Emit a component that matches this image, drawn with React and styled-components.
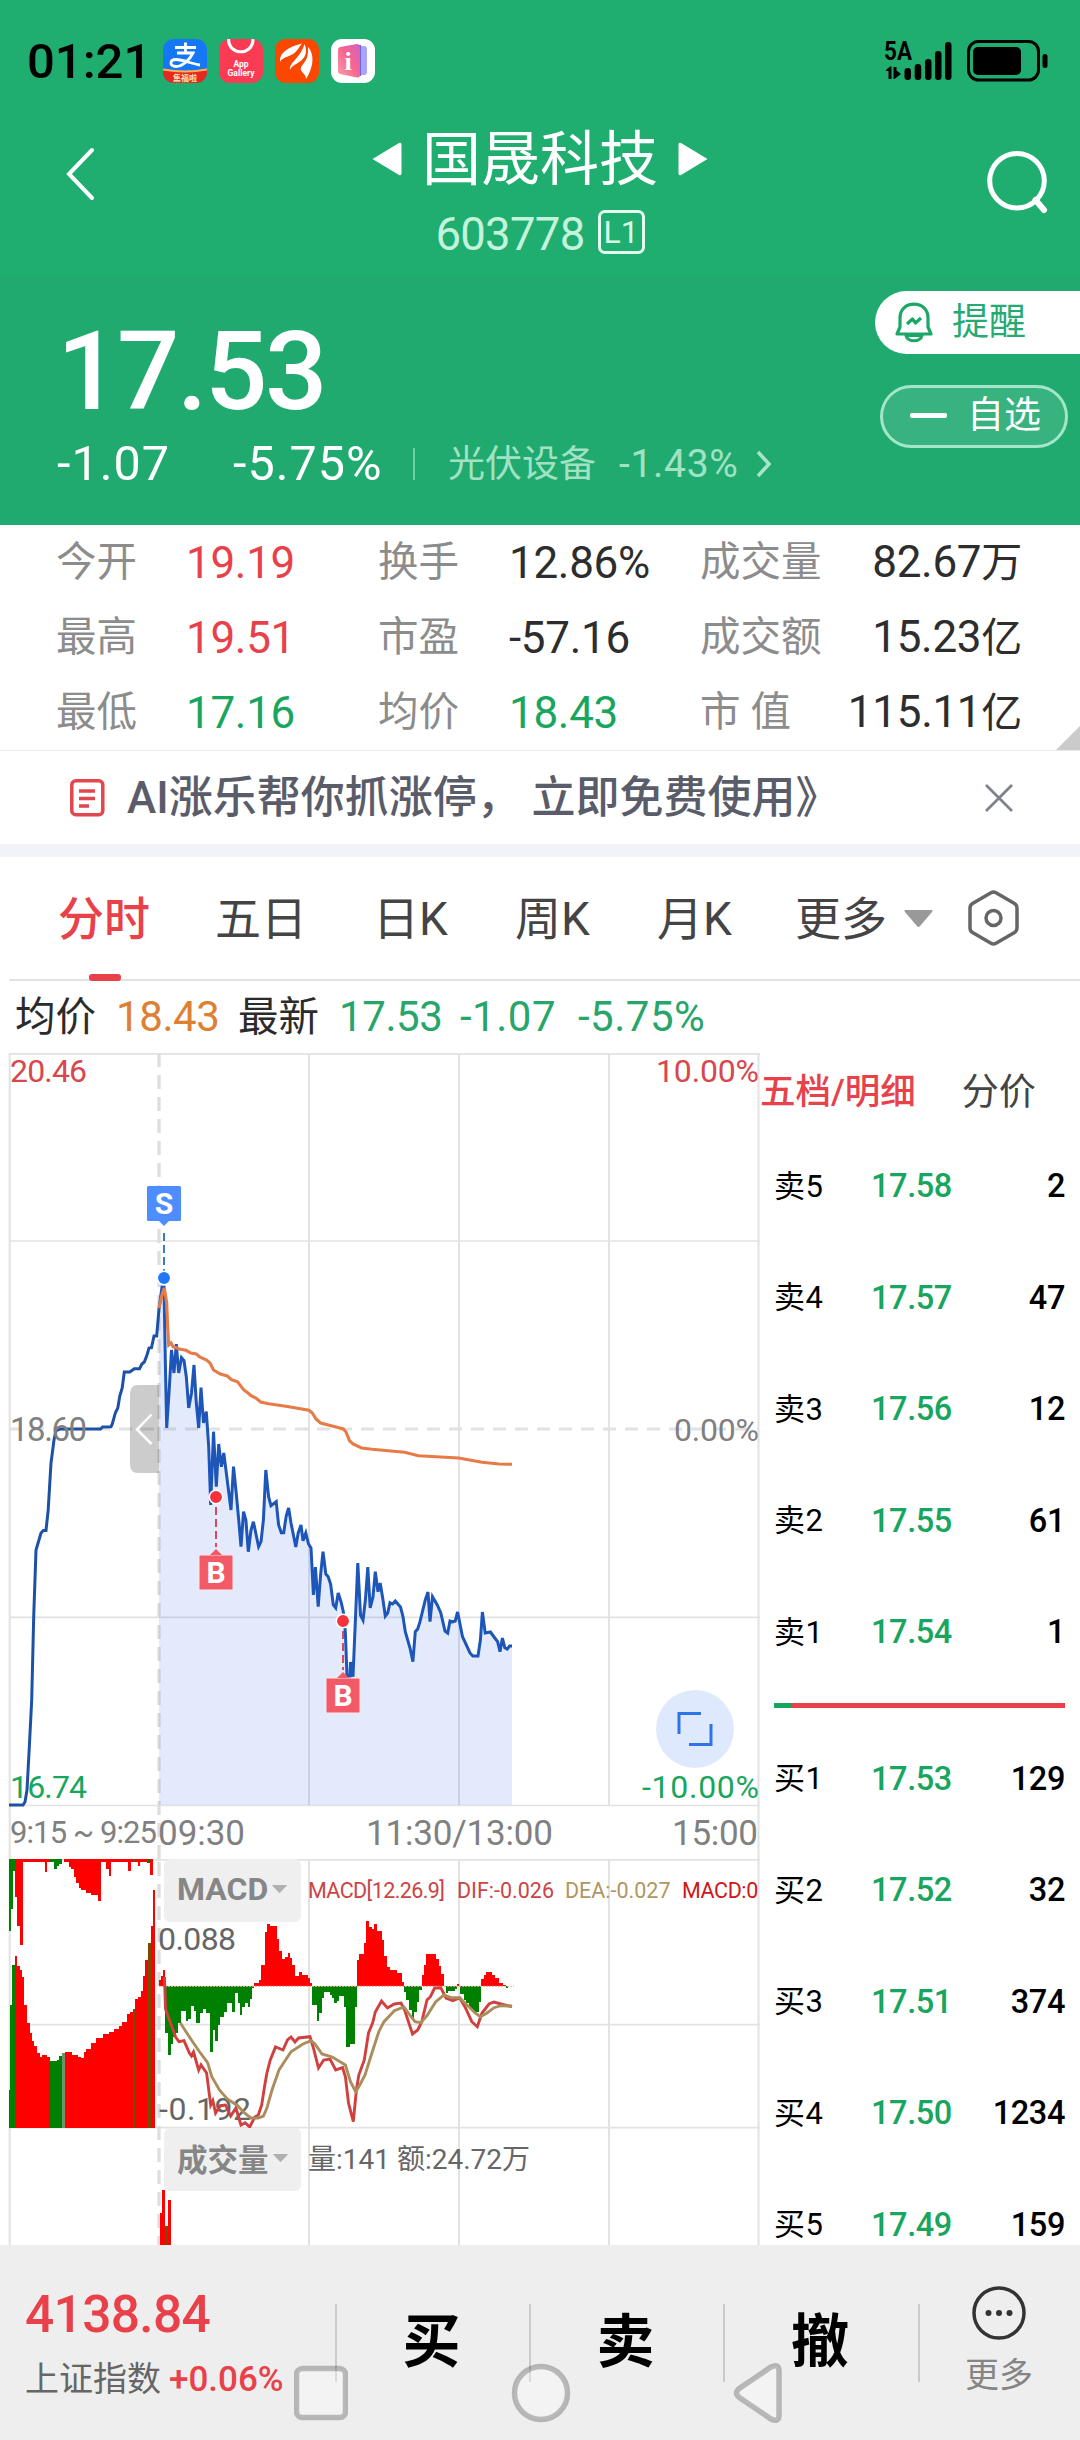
import React, { useState } from 'react';
import styled, { createGlobalStyle, css } from 'styled-components';

const RED = '#e8414a';
const GREEN = '#18a55e';
const GRID = '#e2e2e2';
const FONT = 'Roboto, "Noto Sans CJK SC", sans-serif';

const GlobalStyle = createGlobalStyle`
  * {
    box-sizing: border-box;
  }
  body {
    margin: 0;
    background: #fff;
    font-family: ${FONT};
  }
  svg {
    display: block;
    flex-shrink: 0;
  }
`;

const Page = styled.div`
  width: 1080px;
  height: 2440px;
  display: flex;
  flex-direction: column;
  overflow: hidden;
  background: #fff;
  white-space: nowrap;
`;

const Txt = styled.span`
  font-size: ${(p) => p.$size}px;
  font-weight: ${(p) => p.$weight || 400};
  color: ${(p) => p.$color || 'inherit'};
  letter-spacing: ${(p) => p.$track || 0}px;
  line-height: 1;
`;

/* ---------- header ---------- */

const Top = styled.header`
  height: 276px;
  background: #1fad70;
`;

const StatusBar = styled.div`
  height: 122px;
  padding: 0 31px 0 27px;
  display: flex;
  align-items: center;
  color: #000;
`;

const Clock = styled(Txt)`
  width: 136px;
`;

const AppIcons = styled.div`
  display: flex;
  gap: 12px;
`;

const AppIcon = styled.div`
  width: 44px;
  height: 44px;
  border-radius: 11px;
  overflow: hidden;
  background: ${(p) => p.$bg};
`;

const StatusRight = styled.div`
  margin-left: auto;
  display: flex;
  gap: 11px;
`;

const TitleBar = styled.div`
  height: 154px;
  display: grid;
  grid-template-columns: 200px 1fr 200px;
  color: #fff;
`;

const TitleSide = styled.div`
  display: flex;
  padding: ${(p) => p.$pad};
  justify-content: ${(p) => p.$justify || 'flex-start'};
`;

const TitleBlock = styled.div`
  display: flex;
  flex-direction: column;
  align-items: center;
`;

const TitleLine = styled.div`
  height: 74px;
  display: flex;
  align-items: center;
  gap: 20px;
`;

const CodeLine = styled.div`
  height: 72px;
  display: flex;
  align-items: center;
  gap: 13px;
  color: #c4f3dc;
  span:first-child {
    padding-top: 5px;
  }
`;

const Level = styled.span`
  width: 47px;
  height: 44px;
  border: 3px solid #e4fff2;
  border-radius: 7px;
  display: flex;
  align-items: center;
  justify-content: center;
  color: #d8fbe9;
  font-size: 32px;
  line-height: 1;
`;

/* ---------- quote ---------- */

const Quote = styled.section`
  height: 249px;
  background: #20aa70;
  display: flex;
  justify-content: space-between;
  color: #fff;
`;

const QuoteLeft = styled.div`
  padding: 40px 0 0 57px;
`;

const Price = styled.div`
  height: 112px;
  line-height: 112px;
  font-size: 110px;
  font-weight: 500;
  letter-spacing: -2.5px;
`;

const ChangeLine = styled.div`
  height: 72px;
  display: flex;
  align-items: center;
`;

const ChangeValue = styled(Txt)`
  width: ${(p) => p.$w}px;
`;

const Rule = styled.i`
  width: 2px;
  height: 32px;
  margin-right: 33px;
  background: #6fcfa5;
`;

const Actions = styled.div`
  display: flex;
  flex-direction: column;
  align-items: flex-end;
  gap: 31px;
  padding-top: 15px;
`;

const RemindButton = styled.button`
  width: 205px;
  height: 63px;
  border: 0;
  padding: 0 0 0 20px;
  display: flex;
  align-items: center;
  gap: 19px;
  background: #fff;
  border-radius: 32px 0 0 32px;
  color: #25ab72;
  font-family: inherit;
`;

const WatchButton = styled.button`
  width: 188px;
  height: 63px;
  margin-right: 12px;
  padding: 0 0 2px 27px;
  display: flex;
  align-items: center;
  gap: 20px;
  background: #38b37f;
  border: 3px solid #a3e6c8;
  border-radius: 32px;
  color: #fff;
  font-family: inherit;
`;

const Minus = styled.i`
  width: 37px;
  height: 5px;
  border-radius: 2px;
  background: #fff;
`;

/* ---------- statistics ---------- */

const Stats = styled.section`
  position: relative;
  height: 226px;
  padding-left: 56px;
  border-bottom: 1px solid #eaeaea;
  display: grid;
  grid-template-columns: 130px 192px 131px 191px 130px 192px;
  grid-template-rows: repeat(3, 75px);
  align-items: center;
`;

const StatLabel = styled.span`
  font-size: 40.5px;
  line-height: 1;
  color: #8c8c8c;
`;

const StatValue = styled.span`
  font-size: 44px;
  line-height: 44px;
  letter-spacing: -0.3px;
  color: ${(p) => p.$color || '#2d2d2d'};
  text-align: ${(p) => (p.$end ? 'right' : 'left')};
  small {
    font-size: 41px;
  }
`;

const Corner = styled.i`
  position: absolute;
  right: 0;
  bottom: 0;
  border: 12.5px solid;
  border-color: transparent #cbcbcb #cbcbcb transparent;
`;

const Banner = styled.div`
  height: 106px;
  padding: 0 66px 0 70px;
  display: flex;
  align-items: center;
  border-bottom: 13px solid #f2f3f8;
  color: #5a5d69;
`;

const BannerText = styled.span`
  margin-left: 22px;
  flex: 1;
  font-size: 44px;
  font-weight: 500;
  line-height: 1;
  white-space: pre;
`;

/* ---------- tabs ---------- */

const Tabs = styled.nav`
  height: 124px;
  margin-left: 9px;
  display: flex;
  border-bottom: 2px solid ${GRID};
`;

const Tab = styled.button`
  position: relative;
  width: ${(p) => p.$w}px;
  height: 120px;
  padding: 0 0 5px;
  border: 0;
  background: none;
  text-align: left;
  font-family: inherit;
  font-size: 46px;
  color: #444;
  ${(p) =>
    p.$active &&
    css`
      font-weight: 500;
      color: ${RED};
      &::after {
        content: '';
        position: absolute;
        left: 31px;
        bottom: -4px;
        width: 32px;
        height: 7px;
        border-radius: 3px;
        background: ${RED};
      }
    `}
`;

const TabList = styled.div`
  display: flex;
  flex: 1;
  align-items: flex-start;
  padding-left: 49px;
`;

const TabIcons = styled.div`
  display: flex;
  align-items: center;
  gap: 35px;
  height: 122px;
  padding-right: 61px;
`;

const Legend = styled.div`
  height: 72px;
  padding-left: 15px;
  display: flex;
  align-items: center;
`;

const LegendItem = styled(Txt)`
  width: ${(p) => p.$w}px;
`;

/* ---------- charts ---------- */

const Body = styled.div`
  height: 1192px;
  display: grid;
  grid-template-columns: 760px 320px;
  overflow: hidden;
`;

const Charts = styled.div`
  display: flex;
  flex-direction: column;
`;

const ChartBox = styled.div`
  position: relative;
`;

const Picker = styled.button`
  position: absolute;
  left: 164px;
  top: ${(p) => p.$top}px;
  width: 137px;
  height: 63px;
  padding: 0 0 3px 13px;
  display: flex;
  align-items: center;
  gap: 4px;
  border: 0;
  border-radius: 6px;
  background: #efefef;
  color: #868686;
  font-family: inherit;
  font-weight: 700;
  font-size: ${(p) => p.$size}px;
`;

const Readout = styled.div`
  position: absolute;
  left: 308px;
  top: ${(p) => p.$top}px;
  width: 450px;
  height: 40px;
  display: flex;
  align-items: center;
  color: #666;
`;

const ExpandButton = styled.button`
  position: absolute;
  left: 656px;
  top: 637px;
  width: 78px;
  height: 78px;
  padding: 0;
  border: 0;
  border-radius: 50%;
  background: #dfe9fd;
  display: flex;
  align-items: center;
  justify-content: center;
`;

/* ---------- order book ---------- */

const Book = styled.aside`
  display: flex;
  flex-direction: column;
`;

const BookTabs = styled.div`
  height: 77.5px;
  flex-shrink: 0;
  padding-top: 1px;
  display: flex;
  align-items: center;
  gap: 46px;
`;

const BookRow = styled.div`
  height: 111.5px;
  flex-shrink: 0;
  padding: 0 15px 0 14px;
  display: grid;
  grid-template-columns: 97px 80px 1fr;
  align-items: center;
  font-size: 32.5px;
  font-weight: 500;
  letter-spacing: -0.4px;
  color: #000;
  line-height: 1;
`;

const Side = styled.span`
  font-weight: 400;
  font-size: 31px;
  letter-spacing: 0.5px;
`;

const Quoted = styled.span`
  color: ${GREEN};
`;

const Amount = styled.span`
  text-align: right;
`;

const Ratio = styled.div`
  height: 5px;
  flex-shrink: 0;
  margin: 15px 15px 15px 14px;
  display: flex;
  background: ${RED};
  i {
    width: 17px;
    background: ${GREEN};
  }
`;

/* ---------- bottom bar ---------- */

const Bottom = styled.footer`
  position: relative;
  height: 195px;
  background: #eee;
  display: grid;
  grid-template-columns: 335px 194px 194px 195px 162px;
`;

const Index = styled.div`
  padding: 44px 0 0 25px;
  display: flex;
  flex-direction: column;
  gap: 21px;
`;

const IndexLine = styled.div`
  display: flex;
  align-items: center;
  gap: 8px;
`;

const Trade = styled.button`
  height: 78px;
  margin-top: 59px;
  padding: 0 3px 3px 0;
  border: 0;
  border-left: 2px solid #cacaca;
  background: none;
  font-family: inherit;
  font-size: 58px;
  font-weight: 700;
  line-height: 1;
  color: #000;
`;

const More = styled.div`
  height: 78px;
  margin-top: 59px;
  border-left: 2px solid #cacaca;
`;

const MoreInner = styled.div`
  margin: -18px 2px 0 0;
  display: flex;
  flex-direction: column;
  align-items: center;
  gap: 18px;
`;

const SystemNav = styled.div`
  position: absolute;
  left: 294px;
  top: 117px;
  width: 489px;
  display: flex;
  justify-content: space-between;
  align-items: center;
`;

const stats = [
  ['今开', '19.19', '', RED],
  ['换手', '12.86%', ''],
  ['成交量', '82.67', '万'],
  ['最高', '19.51', '', RED],
  ['市盈', '-57.16', ''],
  ['成交额', '15.23', '亿'],
  ['最低', '17.16', '', GREEN],
  ['均价', '18.43', '', GREEN],
  ['市 值', '115.11', '亿'],
];

const tabs = [
  ['分时', 157],
  ['五日', 158],
  ['日K', 142],
  ['周K', 142],
  ['月K', 138],
  ['更多', 92],
];

const sells = [
  ['卖5', '17.58', '2'],
  ['卖4', '17.57', '47'],
  ['卖3', '17.56', '12'],
  ['卖2', '17.55', '61'],
  ['卖1', '17.54', '1'],
];

const buys = [
  ['买1', '17.53', '129'],
  ['买2', '17.52', '32'],
  ['买3', '17.51', '374'],
  ['买4', '17.50', '1234'],
  ['买5', '17.49', '159'],
];

const preLine =
  '9,755 23,755 25,752 27,740 29,703 31.7,650 33.7,567 36,500 41,483 43.4,480.5 46,480.5 48.2,460 51,413 54,390 56,380.5 60,379 100.5,379 102.6,377 111,376.7 112.3,374 115.4,362.7 117.8,358 119.8,346 122.2,338 124.3,322 129.8,322 134.3,318.7 139.5,318.7 141.9,314 144.3,312 147,305 149,298 151.5,297.7 154,286 156.7,286 159,259';

const priceLine =
  '159,259 162,237 164,237 165.3,310 166.7,378 169,343 171.5,300 174,323 176.3,294 178.7,323 181.5,307.7 184,310.7 186.3,326.7 188.7,358 191.5,343 194,315 196.3,353 198.7,378 201,337.7 203.5,373 206.3,361.7 208.7,396.7 210.7,455 213.5,381.7 216.3,436.7 218.7,394 221.4,416.7 223.8,403 231,460 233.5,416.7 236.2,443 239,473 241,496.7 243.5,461.7 245.9,470 248.3,501.7 251,480 253.4,471.7 258.6,496.7 261,491.7 263.4,470 265.8,420 268.6,446.7 271,455.7 276.2,451.7 278.6,475 281.3,482.7 283.7,482.7 286.2,466 288.6,458 291,473 295.8,497 298.2,483 301,475 303,490.7 305.8,483 308.5,494 311,498 313.4,545 315.4,517 318.2,556.7 320.6,525 323,501.7 325.8,524 328.2,526.7 330.6,534 333.3,555 335.7,558 338.2,543 341,551.7 343.3,561.7 345.4,583 347,626.7 348.5,661 350.5,612 353,626.7 355.4,570 357.8,513 360.5,565 363,570 365.4,550 367.8,517 370.2,558 373,546.7 375.3,521.7 378,541.7 380.2,533 383,550 385.3,566 387.7,563 390,552.7 392.6,554 395.3,551 400.5,557 403,566.7 405.3,581.7 410,598 412.9,611.7 415.3,581.7 417.7,579 420,571.7 425.3,550 428,542 430,571.7 432.5,546.7 437.3,555 440.8,563 445,581 447.7,583 450,571 452.5,572 455.2,571 457.6,562 462.5,586.7 470,603 472.8,606 478,606 480.4,590 482.4,562 485.2,583 490.4,582 494.8,588 497.6,591.7 500,601.7 502.4,588 504.8,597.7 507.2,599 509.6,596 512,596';

const avgLine =
  '159,258 162,245 164.3,238 166.7,253 167.7,277 168.7,295 171,293 173.2,297 176.3,297.7 179,299 186,300.3 191,303 196.3,304 199.7,307 206.6,310 210,313 213.5,320 220.4,324 227.3,326 231.4,329.7 237.6,331.7 243.8,340 248,343 251.4,346 255.9,348 260.7,352 268.6,353.7 285.8,356.3 296,358 309,360.3 312.3,363 316,369 320.6,373 332.3,376 343.3,379 346,382 349.5,390.7 353,394 361.6,398 372,399.3 404.6,402.3 418.4,405.7 458.7,408 482,412.3 499,414 512,414.3';

const difLine =
  '164.5,118 165.5,150 175.6,178 179,182.7 184,181.7 189.4,194 191.5,197 193.5,193 198.7,211 201,206 206.6,214 210.7,246 212.8,241.7 215.6,254 220.4,246.7 225.5,246 230.7,257 235.9,249 241,266 245.2,263.7 249.7,268 254.8,258 258.3,256 261.7,246 264.5,227.7 266.9,214 270.3,201 275.5,188 283,191 287.5,181 291,178 295,183 298.6,179 310,177.7 313.4,189 318.5,209 323.7,201 330,200 335.7,211 342.6,208.7 345.4,217.7 348.5,244 353.3,262.7 356.4,231 358.8,216 364.3,201 368.5,174 372.6,164 375.3,153 381.5,142 387.4,149 394.3,145 401,144 404.6,151 412.5,175 417.7,171 421.8,162.7 427,141 430.4,137.7 434.6,129 440.8,128.7 446,139 452.8,141.7 459.7,139 464.9,147.7 471.8,162.7 477.3,167.7 482,154 489,145 494,143 501,145 512,147.7';

const deaLine =
  '180.4,164 186,172.7 192.8,183 199.7,193 207.6,203.7 211.8,217.7 219.4,231 227.3,240 237.6,246.7 244.5,254 250.7,259 258.3,259 263.4,257 266.9,249 272,231 279,211 291,192.7 303,185 311,181.7 315,185 322,195 332.3,198 345.4,206 350.5,222.7 355.7,232.7 359.8,226 365,216 371.9,194 378.8,172.7 384,162.7 394.3,151.7 404,148 409.8,156 415,162.7 420.8,163.7 427,156.7 435.6,143 444,136 451,138.7 459.7,138.7 464.9,144 475.2,154 480.4,157.7 487,154 494,148.7 501,146.7 512,147';

const R = '#ff0000';
const G = '#008000';
const D = '#7a4a00';

// [start x, bar end y, colour]; a bar runs to the next start x
const auctionTop = [
  [9, 71.7, G], [10.7, 50, G], [12.7, 12, G], [14.8, 37.7, R], [17.2, 67, R], [19.6, 86, R],
  [22.7, 3.3, R], [44.8, 12.7, R], [47.2, 3.3, R], [49.6, 3.3, G], [54.4, 10, G], [56.8, 7, G],
  [59.2, 5, G], [62, 0, R], [64.4, 3, R], [68.9, 8.3, R], [71.3, 10.3, R], [73.7, 18, R],
  [76.1, 24, R], [78.5, 28.7, R], [81.3, 31, R], [86.1, 34, R], [91.3, 36.3, R], [98.1, 41.7, R],
  [101.2, 3.3, R], [105.7, 10, R], [108.5, 16.7, R], [110.9, 3.3, R], [128.1, 11.7, R], [130.9, 3, R],
  [132.6, 3, D], [135.3, 3, R], [137.7, 6.7, R], [140.2, 3, R], [147, 4.3, G], [149.8, 16, R], [153, 0, R],
];

const auctionVolume = [
  [9, 231, G], [10, 146, G], [12.4, 106.3, G], [14.5, 97, R], [17.2, 107, R], [19.6, 111, R],
  [22, 118.3, R], [24.4, 146, R], [26.9, 164.3, R], [29.6, 174.3, R], [32, 181.7, R], [34.4, 186.7, R],
  [37.2, 194.3, R], [39.6, 197.7, R], [42, 196, R], [46.8, 198.3, R], [49.6, 202, G], [56.8, 201, G],
  [59.2, 197, G], [62, 193.7, '#6c946c'], [64.7, 193.3, R], [72.3, 196, R], [77.5, 197.7, R], [80.9, 198.7, R],
  [83.7, 193.3, R], [86.1, 190.3, R], [91.3, 184.3, R], [96.4, 178.7, R], [103.3, 175, R], [108.5, 172.7, R],
  [113.6, 170, R], [118.8, 166.7, R], [122.2, 162.7, R], [127.4, 155, R], [130.2, 152.7, R], [132.6, 150.3, D],
  [135.3, 140, R], [137.7, 137.7, R], [140.5, 132, R], [142.9, 117, R], [145.3, 101, R], [148.1, 84.3, D],
  [150.5, 67, R], [152.5, 31, R], [155.3, 268, R],
];

const histogram = [
  [159, 121, R], [161, 117, R], [163, 111, R], [165.3, 173.7, G], [167.7, 196, G], [170.5, 185, G],
  [172.9, 177.7, G], [175.6, 173.7, G], [178, 163.7, G], [180.8, 152, G], [186, 162, G], [188.4, 160, G],
  [191, 147, G], [193.5, 152, G], [196.3, 164.3, G], [199.7, 154, G], [203.2, 150.3, G], [205.6, 154, G],
  [210, 192.7, G], [212.5, 171, G], [214.9, 181.7, G], [217.6, 166, G], [220.4, 157.7, G], [223.8, 152.7, G],
  [227.3, 144, G], [231.7, 152.7, G], [235.2, 134, G], [237.6, 144, G], [240, 156, G], [242.4, 148, G],
  [245.2, 144, G], [247.6, 147.7, G], [250, 140, G], [252.4, 129, G], [254.1, 124, R], [258.9, 121, R],
  [261, 106, R], [264.5, 72.7, R], [266.5, 65, R], [269.6, 67, R], [276.9, 80, R], [279.3, 92, R],
  [282, 100, R], [285.1, 97.7, R], [287.5, 94, R], [290, 98.7, R], [292.4, 106, R], [294.8, 116.7, R],
  [299.2, 113, R], [302, 116, R], [307.5, 119, R], [309.9, 123.7, R], [312.3, 146, G], [316.8, 161.7, G],
  [319.2, 153.7, G], [322, 139, G], [324.4, 132.7, G], [329.5, 136, G], [332, 139, G], [334.4, 144, G],
  [336.8, 141.7, G], [339.2, 137, G], [343.7, 147.7, G], [346.4, 187.7, G], [349.9, 185, G], [354.7, 148, G],
  [356.7, 101, R], [358.8, 95, R], [363.6, 83.7, R], [366.4, 62, R], [369.1, 68, R], [371.6, 70, R],
  [374, 65, R], [376.7, 71.7, R], [381.5, 81, R], [384.3, 97, R], [386.7, 107.7, R], [389.5, 111, R],
  [396.7, 114, R], [401.5, 122.7, R], [404, 133, G], [406.3, 141, G], [408.7, 151, G], [411.5, 160, G],
  [414.3, 152.7, G], [416.7, 142.7, G], [419, 131, G], [421.5, 116, R], [423.6, 106, R], [426.3, 95, R],
  [436.3, 100, R], [438.7, 107, R], [441, 115, R], [443.9, 127.3, R], [445.6, 133.7, G], [448, 132, G],
  [454.5, 130, G], [456.5, 125, R], [459, 127.3, R], [460.4, 135, G], [463.5, 141, G], [465.9, 144, G],
  [468.7, 150, G], [471.8, 153, G], [478.7, 142.7, G], [481, 120, R], [483.5, 116, R], [486.2, 113, R],
  [492.4, 116, R], [495.2, 119, R], [499.3, 123.7, R], [503.4, 126, R], [505.5, 128.5, G], [508.3, 127.3, R],
];

const volume = [
  [159.8, 354, R], [162, 331, R], [165.3, 367, D], [167.8, 341, R], [171, 386, R],
];

const Bars = ({ data, base }) => (
  <g shapeRendering="crispEdges">
    {data.slice(0, -1).map(([x, y, fill], i) => (
      <rect
        key={i}
        x={x}
        y={Math.min(y, base)}
        width={data[i + 1][0] - x}
        height={Math.abs(y - base)}
        fill={fill}
      />
    ))}
  </g>
);

const Label = ({ x, y, w, size = 33, color = '#808080', end, children }) => (
  <text
    x={x}
    y={y}
    fontSize={size}
    fill={color}
    textLength={w}
    textAnchor={end ? 'end' : 'start'}
  >
    {children}
  </text>
);

const TradeMark = ({ x, dot, top, kind }) => {
  const sell = kind === 'S';
  const fill = sell ? '#4d8dff' : '#f25a68';
  const tip = sell
    ? `M${x - 6},${top + 34}l6,6l6,-6z`
    : `M${x - 6},${top}l6,-6l6,6z`;
  return (
    <g>
      <path
        d={sell ? `M${x},${top + 47}V${dot - 6}` : `M${x},${dot + 10}V${top - 8}`}
        stroke={sell ? '#3b7dc0' : '#d9485e'}
        strokeWidth="2"
        strokeDasharray="8 4"
      />
      <circle cx={x} cy={dot} r="6.7" fill={sell ? '#2175f8' : '#f4333f'} stroke="#fff" strokeWidth="1.5" />
      <rect x={x - 17} y={top} width="34" height="35" rx="1.5" fill={fill} stroke={sell ? 'none' : '#fde8ee'} />
      <path d={tip} fill={fill} />
      <text x={x} y={top + 28} fontSize="30" fontWeight="700" fill="#fff" textAnchor="middle">
        {kind}
      </text>
    </g>
  );
};

const PriceChart = () => (
  <svg width="760" height="806" viewBox="0 3 760 806" fill="none" fontFamily={FONT}>
    <path d="M9,3.8H760M9,191H760M9,567.3H760M9,755.5H760" stroke={GRID} strokeWidth="1.7" />
    <path d="M9.7,3V809M309,3V755M459,3V755M609,3V755M758.5,3V809" stroke={GRID} strokeWidth="2" />
    <path d="M9,379H758" stroke={GRID} strokeWidth="2.8" strokeDasharray="13 9" />
    <path d="M159,3V809" stroke="#dedede" strokeWidth="3.3" strokeDasharray="14 8" />
    <polygon points={`159,755 ${priceLine} 512,755`} fill="#3b6fee" fillOpacity="0.15" />
    <polyline points={preLine} stroke="#1d51a6" strokeWidth="3" />
    <Label x="10" y="32" w="77" size="32" color="#d8474e">20.46</Label>
    <Label x="759" y="32" w="103" size="32" color="#d8474e" end>10.00%</Label>
    <Label x="10" y="391" w="77" size="33">18.60</Label>
    <Label x="759" y="391" w="85" size="32" end>0.00%</Label>
    <Label x="10" y="748" w="77" size="32" color={GREEN}>16.74</Label>
    <Label x="759" y="748" w="117" size="32" color={GREEN} end>-10.00%</Label>
    <polyline points={priceLine} stroke="#1d56b8" strokeWidth="3" />
    <polyline points={avgLine} stroke="#e77b48" strokeWidth="3.1" />
    <path d="M159,335H138q-8,0 -8,9V414q0,9 8,9H159z" fill="#000" fillOpacity="0.2" />
    <path d="M151.5,364.5L137,379.5L151.5,394" stroke="#fff" strokeWidth="2.5" />
    <TradeMark kind="S" x={164} dot={228} top={136} />
    <TradeMark kind="B" x={216} dot={447} top={505} />
    <TradeMark kind="B" x={343} dot={571} top={628} />
    <Label x="10" y="793" w="147" size="31">9:15 ~ 9:25</Label>
    <Label x="158" y="795" w="87" size="35">09:30</Label>
    <Label x="366" y="795" w="187" size="35">11:30/13:00</Label>
    <Label x="758" y="795" w="86" size="35" end>15:00</Label>
  </svg>
);

const IndicatorChart = () => (
  <svg width="760" height="386" viewBox="0 0 760 386" fill="none" fontFamily={FONT}>
    <path d="M9,0.8H760M9,165.7H760M9,268.7H760" stroke={GRID} strokeWidth="1.8" />
    <path d="M9.7,0V386M309,0V386M459,0V386M609,0V386M758.5,0V386" stroke={GRID} strokeWidth="2" />
    <path d="M159,3V386" stroke="#dedede" strokeWidth="3.3" strokeDasharray="14 8" />
    <Bars data={auctionTop} base={0} />
    <Bars data={auctionVolume} base={268.5} />
    <Bars data={histogram} base={127.3} />
    <Bars data={volume} base={386} />
    <path d="M159,127.3H514" stroke="#f7a9a0" strokeWidth="1" strokeDasharray="2 1" />
    <Label x="158" y="91" w="78" size="32" color="#666">0.088</Label>
    <Label x="159" y="261" w="92" size="32" color="#666">-0.192</Label>
    <polyline points={difLine} stroke="#d0403f" strokeWidth="2.9" />
    <polyline points={deaLine} stroke="#a98e5b" strokeWidth="2.9" />
  </svg>
);

const Caret = ({ w = 15, h = 8, color = '#b0b0b0' }) => (
  <svg width={w} height={h} viewBox="0 0 15 8" preserveAspectRatio="none">
    <path d="M0.8,0H14.2Q15,0 14.6,0.8L8.2,7.6Q7.5,8.3 6.8,7.6L0.4,0.8Q0,0 0.8,0z" fill={color} />
  </svg>
);

const AlipayIcon = () => (
  <svg width="44" height="44" viewBox="0 0 44 44" fill="none">
    <path d="M0,30Q22,34 44,30V44H0z" fill="#e6281e" />
    <path d="M0,30.5Q22,34.5 44,30.5" stroke="#ffb25a" strokeWidth="2" />
    <path
      d="M12,8.5H33M22.5,3.5V14M14,14H30C27,20 20,27.500 13,27.500C6,27.500 6.500,20.500 13,20.500C20,20.500 29,25 37,26"
      stroke="#fff"
      strokeWidth="2.800"
    />
    <text x="22" y="41.500" fontSize="8" fontWeight="700" fill="#ffe3b0" textAnchor="middle" fontFamily={FONT}>
      集福啦
    </text>
  </svg>
);

const GalleryIcon = () => (
  <svg width="44" height="44" viewBox="0 0 44 44" fill="none" fontFamily={FONT}>
    <path d="M9.500,0C9.500,17 34,17 34,0" stroke="#fff" strokeWidth="3.200" />
    <g fontSize="8.500" fontWeight="700" fill="#fff" textAnchor="middle">
      <text x="22" y="27.500">App</text>
      <text x="22" y="37">Gallery</text>
    </g>
  </svg>
);

const BrokerIcon = () => (
  <svg width="44" height="44" viewBox="0 0 44 44" fill="#fff">
    <path d="M5,23C4,14 13,8 27,4.500C23,9 22,14 14,17C9,19 6.500,20 5,23z" />
    <path d="M15,31C14,23 25,20 29.500,5C34,15 28,21 22,24.500C18,26.500 16,28 15,31z" />
    <path d="M31,40C31,34 24,33 26,28.500C28,24 34,21 33,8C41,17 37,31 31,40z" />
  </svg>
);

const InfoIcon = () => (
  <svg width="44" height="44" viewBox="0 0 44 44">
    <defs>
      <linearGradient id="book" x1="0" y1="1" x2="1" y2="0">
        <stop offset="0" stopColor="#f9a0ae" />
        <stop offset="0.5" stopColor="#f8668e" />
        <stop offset="1" stopColor="#d45fbd" />
      </linearGradient>
    </defs>
    <path d="M28,7H33Q36,7 36,10V33Q36,36 33,36H28z" fill="#a9a4f8" />
    <path d="M26,6H30V37H26z" fill="#6b62e4" />
    <path d="M9,8L26,5Q29,5 29,8V36Q29,39 26,38.500L9,35Q7,34.500 7,32V11Q7,8.500 9,8z" fill="url(#book)" />
    <text x="17" y="31" fontSize="26" fontWeight="700" fill="#fff" textAnchor="middle" fontFamily='"Liberation Serif", serif'>
      i
    </text>
  </svg>
);

const SignalIcon = () => (
  <svg width="72" height="42" viewBox="0 0 72 42" fontFamily={FONT}>
    <text x="0" y="20" fontSize="25" fontWeight="700" textLength="28" lengthAdjust="spacingAndGlyphs">5A</text>
    <path d="M2,30L6,26.500H7.500V39H4.500V31H2zM9.500,27H12.500V30.500L17,34L10.500,39H9.500z" />
    <rect x="20.500" y="28" width="6.500" height="12" rx="3.200" />
    <rect x="30.700" y="24" width="6.500" height="16" rx="3.200" />
    <rect x="41" y="19" width="6.500" height="21" rx="3.200" />
    <rect x="51" y="11" width="6.500" height="29" rx="3.200" />
    <rect x="61" y="2" width="6.500" height="38" rx="3.200" />
  </svg>
);

const BatteryIcon = () => (
  <svg width="82" height="42" viewBox="0 0 82 42" fill="none">
    <rect x="1.500" y="1.500" width="70" height="38.500" rx="10" stroke="#000" strokeWidth="3" />
    <rect x="6" y="7" width="48" height="28" rx="5" fill="#000" />
    <rect x="75.500" y="14" width="5" height="14" rx="2.500" fill="#000" />
  </svg>
);

const BellIcon = () => (
  <svg width="38" height="41" viewBox="0 0 38 41" fill="none" stroke="#1ca766" strokeWidth="3.200" strokeLinejoin="round">
    <path d="M5,25V16C5,7.500 11,2.200 19,2.200S33,7.500 33,16V25L36,32H2z" />
    <path d="M11,33.500C12.500,40.500 25.500,40.500 27,33.500z" />
    <path d="M12,22L17.500,17L20.500,21L26,16" />
  </svg>
);

const BookSide = ({ rows }) =>
  rows.map(([side, price, amount]) => (
    <BookRow key={side}>
      <Side>{side}</Side>
      <Quoted>{price}</Quoted>
      <Amount>{amount}</Amount>
    </BookRow>
  ));

const App = () => {
  const [active, setActive] = useState('分时');

  return (
    <>
      <GlobalStyle />
      <Page>
        <Top>
          <StatusBar>
            <Clock $size={49} $weight={500}>01:21</Clock>
            <AppIcons>
              <AppIcon $bg="#1677f5"><AlipayIcon /></AppIcon>
              <AppIcon $bg="#fb3a54"><GalleryIcon /></AppIcon>
              <AppIcon $bg="#fc4700"><BrokerIcon /></AppIcon>
              <AppIcon $bg="#fff"><InfoIcon /></AppIcon>
            </AppIcons>
            <StatusRight>
              <SignalIcon />
              <BatteryIcon />
            </StatusRight>
          </StatusBar>
          <TitleBar>
            <TitleSide $pad="25px 0 0 65px">
              <svg width="30" height="54" viewBox="0 0 30 54" fill="none">
                <path d="M27,3L4,27L27,51" stroke="#fff" strokeWidth="4" strokeLinecap="round" />
              </svg>
            </TitleSide>
            <TitleBlock>
              <TitleLine>
                <svg width="30" height="34" viewBox="0 0 30 34">
                  <path d="M0.500,17L27,1Q29.500,0 29.500,3V31Q29.500,34 27,33z" fill="#fff" />
                </svg>
                <Txt $size={59}>国晟科技</Txt>
                <svg width="30" height="34" viewBox="0 0 30 34">
                  <path d="M29.500,17L3,1Q0.500,0 0.500,3V31Q0.500,34 3,33z" fill="#fff" />
                </svg>
              </TitleLine>
              <CodeLine>
                <Txt $size={45.5} $track={-0.7}>603778</Txt>
                <Level>L1</Level>
              </CodeLine>
            </TitleBlock>
            <TitleSide $pad="28px 31px 0 0" $justify="flex-end">
              <svg width="64" height="64" viewBox="0 0 64 64" fill="none" stroke="#fff" strokeWidth="5">
                <circle cx="32" cy="30.700" r="27.300" />
                <path d="M50.500,50L59,60" strokeWidth="6" strokeLinecap="round" />
              </svg>
            </TitleSide>
          </TitleBar>
        </Top>

        <Quote>
          <QuoteLeft>
            <Price>17.53</Price>
            <ChangeLine>
              <ChangeValue $size={48.5} $track={1} $w={176}>-1.07</ChangeValue>
              <ChangeValue $size={48.5} $track={1} $w={180}>-5.75%</ChangeValue>
              <Rule />
              <ChangeValue $size={37} $w={171} $color="#a0e2c3">光伏设备</ChangeValue>
              <ChangeValue $size={39} $track={0.7} $w={136} $color="#a0e2c3">-1.43%</ChangeValue>
              <svg width="18" height="28" viewBox="0 0 18 28" fill="none">
                <path d="M3,2L14,14L3,26" stroke="#a8e6ca" strokeWidth="3.500" />
              </svg>
            </ChangeLine>
          </QuoteLeft>
          <Actions>
            <RemindButton>
              <BellIcon />
              <Txt $size={37}>提醒</Txt>
            </RemindButton>
            <WatchButton>
              <Minus />
              <Txt $size={37}>自选</Txt>
            </WatchButton>
          </Actions>
        </Quote>

        <Stats>
          {stats.map(([label, value, unit, color], i) => (
            <React.Fragment key={label}>
              <StatLabel>{label}</StatLabel>
              <StatValue $color={color} $end={i % 3 === 2}>
                {value}
                {unit && <small>{unit}</small>}
              </StatValue>
            </React.Fragment>
          ))}
          <Corner />
        </Stats>

        <Banner>
          <svg width="35" height="38" viewBox="0 0 35 38" fill="none" stroke="#e2464f" strokeWidth="3.500">
            <rect x="1.800" y="1.800" width="31" height="34" rx="4" />
            <path d="M9,12H25M9,19.500H25M9,27H19" />
          </svg>
          <BannerText>AI涨乐帮你抓涨停， 立即免费使用》</BannerText>
          <svg width="30" height="30" viewBox="0 0 30 30" fill="none">
            <path d="M2,2L28,28M28,2L2,28" stroke="#7d828c" strokeWidth="2.800" />
          </svg>
        </Banner>

        <Tabs>
          <TabList>
            {tabs.map(([name, w]) => (
              <Tab key={name} $w={w} $active={name === active} onClick={() => setActive(name)}>
                {name}
              </Tab>
            ))}
          </TabList>
          <TabIcons>
            <Caret w={29} h={17} color="#999" />
            <svg width="51" height="56" viewBox="0 0 51 56" fill="none" stroke="#666" strokeWidth="3.500">
              <path d="M23,2.800Q25.500,1.300 28,2.800L46.500,13.500Q49,15 49,18V38Q49,41 46.500,42.500L28,53.200Q25.500,54.700 23,53.200L4.500,42.500Q2,41 2,38V18Q2,15 4.500,13.500z" />
              <circle cx="25.500" cy="28" r="7.500" />
            </svg>
          </TabIcons>
        </Tabs>

        <Legend>
          <LegendItem $size={40.5} $w={101} $color="#2b2b2b">均价</LegendItem>
          <LegendItem $size={42} $track={-0.4} $w={122} $color="#dd8033">18.43</LegendItem>
          <LegendItem $size={40.5} $w={101} $color="#2b2b2b">最新</LegendItem>
          <LegendItem $size={42} $track={-0.4} $w={121} $color="#27a56a">17.53</LegendItem>
          <LegendItem $size={42} $track={0.5} $w={118} $color="#27a56a">-1.07</LegendItem>
          <LegendItem $size={42} $track={0.5} $w={130} $color="#27a56a">-5.75%</LegendItem>
        </Legend>

        <Body>
          <Charts>
            <ChartBox>
              <PriceChart />
              <ExpandButton>
                <svg width="36" height="36" viewBox="0 0 36 36" fill="none" stroke="#2f74e6" strokeWidth="3">
                  <path d="M2,23V2.500H24M34,13V33.500H12" />
                </svg>
              </ExpandButton>
            </ChartBox>
            <ChartBox>
              <IndicatorChart />
              <Picker $top={0} $size={32}>
                MACD
                <Caret />
              </Picker>
              <Readout $top={12}>
                <LegendItem $size={21.5} $track={-0.6} $w={149} $color="#cc4444">MACD[12.26.9]</LegendItem>
                <LegendItem $size={21.5} $w={108} $color="#cc4444">DIF:-0.026</LegendItem>
                <LegendItem $size={21.5} $w={117} $color="#b0965f">DEA:-0.027</LegendItem>
                <LegendItem $size={21.5} $track={-0.4} $w={76} $color="#cf1616">MACD:0</LegendItem>
              </Readout>
              <Picker $top={269} $size={30.5}>
                成交量
                <Caret />
              </Picker>
              <Readout $top={281}>
                <Txt $size={28}>量:141 额:24.72万</Txt>
              </Readout>
            </ChartBox>
          </Charts>

          <Book>
            <BookTabs>
              <Txt $size={35.5} $weight={500} $color={RED}>五档/明细</Txt>
              <Txt $size={37} $color="#444">分价</Txt>
            </BookTabs>
            <BookSide rows={sells} />
            <Ratio><i /></Ratio>
            <BookSide rows={buys} />
          </Book>
        </Body>

        <Bottom>
          <Index>
            <Txt $size={51.5} $weight={500} $track={-0.7} $color={RED}>4138.84</Txt>
            <IndexLine>
              <Txt $size={34} $color="#666">上证指数</Txt>
              <Txt $size={35} $weight={500} $color={RED}>+0.06%</Txt>
            </IndexLine>
          </Index>
          <Trade>买</Trade>
          <Trade>卖</Trade>
          <Trade>撤</Trade>
          <More>
            <MoreInner>
              <svg width="54" height="54" viewBox="0 0 54 54" fill="none">
                <circle cx="27" cy="27" r="25" stroke="#333" strokeWidth="3.500" />
                <path d="M16.500,27h.01M27,27h.01M37.500,27h.01" stroke="#333" strokeWidth="6" strokeLinecap="round" />
              </svg>
              <Txt $size={34} $color="#858585">更多</Txt>
            </MoreInner>
          </More>
          <SystemNav>
            <svg width="54" height="60" viewBox="0 0 54 60">
              <rect x="2.500" y="5.500" width="49" height="49" rx="6" fill="#fff" fillOpacity="0.300" stroke="#000" strokeOpacity="0.240" strokeWidth="5.500" />
            </svg>
            <svg width="60" height="60" viewBox="0 0 60 60">
              <circle cx="30" cy="30" r="26.500" fill="#fff" fillOpacity="0.300" stroke="#000" strokeOpacity="0.240" strokeWidth="5.500" />
            </svg>
            <svg width="50" height="62" viewBox="0 0 50 62">
              <path d="M38,5Q46,1 46,9V53Q46,61 38,57L7,36Q0,31 7,26z" fill="#fff" fillOpacity="0.300" stroke="#000" strokeOpacity="0.240" strokeWidth="5.500" />
            </svg>
          </SystemNav>
        </Bottom>
      </Page>
    </>
  );
};

export default App;
